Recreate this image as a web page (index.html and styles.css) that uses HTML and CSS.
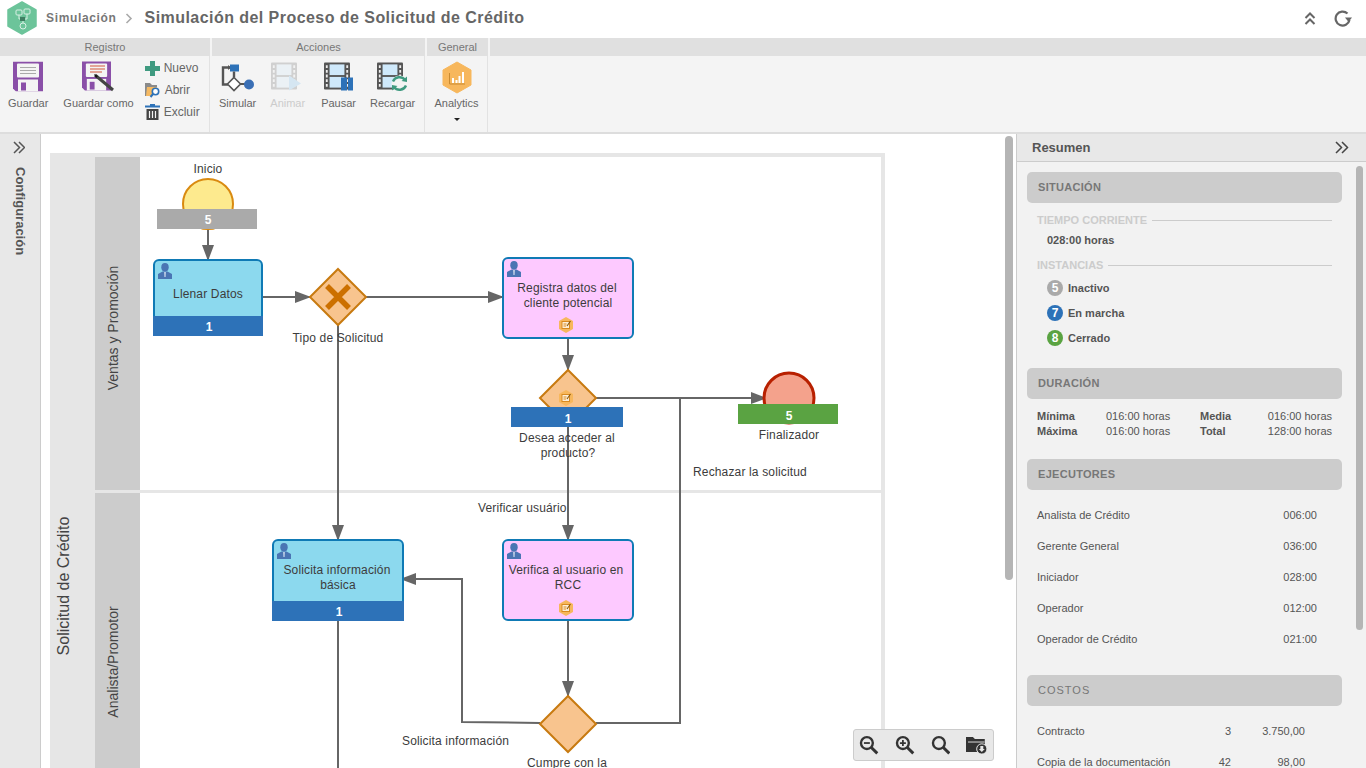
FILE: index.html
```html
<!DOCTYPE html>
<html lang="es">
<head>
<meta charset="utf-8">
<title>Simulación del Proceso de Solicitud de Crédito</title>
<link rel="stylesheet" href="styles.css">
</head>
<body>

<!-- shared icons -->
<svg class="defs" width="0" height="0" xmlns="http://www.w3.org/2000/svg">
  <symbol id="person" viewBox="0 0 14 16">
    <ellipse cx="7" cy="4.2" rx="3.7" ry="4.2" fill="#4a75b4"/>
    <path d="M0 16V11L4.5 8.5H9.5L14 11V16Z" fill="#4a75b4"/>
    <path d="M6.3 9H7.7L7.5 14H6.5Z" fill="#dfe9f5"/>
  </symbol>
  <symbol id="badge" viewBox="0 0 14 16">
    <path d="M7 0L14 4V12L7 16L0 12V4Z" fill="#f7b75c"/>
    <rect x="3" y="4.5" width="7.5" height="7" fill="#fdeed6" stroke="#d98a20" stroke-width="1"/>
    <path d="M4.5 7H7.5M4.5 9H7" stroke="#d98a20" stroke-width="1"/>
    <path d="M8 9L11.5 4" stroke="#8a5a10" stroke-width="1.2"/>
  </symbol>
  <symbol id="film" viewBox="0 0 28 29">
    <rect width="28" height="29" rx="1" fill="#555"/>
    <rect x="6" y="2" width="16" height="11.5" fill="#cfe9fb"/>
    <rect x="6" y="15.5" width="16" height="11.5" fill="#cfe9fb"/>
    <path d="M2 3h2v3H2zM2 8h2v3H2zM2 13h2v3H2zM2 18h2v3H2zM2 23h2v3H2zM24 3h2v3h-2zM24 8h2v3h-2zM24 13h2v3h-2zM24 18h2v3h-2zM24 23h2v3h-2z" fill="#eee"/>
  </symbol>
  <symbol id="floppy" viewBox="0 0 30 30">
    <path d="M0 0H30V30H3L0 27Z" fill="#8a4fa8"/>
    <rect x="4" y="2" width="22" height="14" rx="1" fill="#f4f4f4"/>
    <rect x="5" y="18" width="20" height="12" fill="#f4f4f4"/>
    <rect x="8" y="21" width="5" height="8" fill="#8a4fa8"/>
  </symbol>
  <symbol id="lens" viewBox="0 0 20 20">
    <circle cx="8" cy="8" r="6" fill="none" stroke="#333" stroke-width="2.4"/>
    <path d="M12.5 12.5L18.5 18.5" stroke="#333" stroke-width="3"/>
  </symbol>
</svg>

<div class="page">

  <header class="topbar">
    <svg class="logo" width="30" height="34" viewBox="0 0 30 34" xmlns="http://www.w3.org/2000/svg">
      <path d="M15 1L29 9V25L15 33L1 25V9Z" fill="#6cc49a" stroke="#6cc49a" stroke-width="1.5" stroke-linejoin="round"/>
      <rect x="9" y="9" width="6" height="5" rx="1" fill="none" stroke="#d8f0e4"/>
      <rect x="17" y="8" width="6" height="5" rx="1" fill="none" stroke="#d8f0e4"/>
      <rect x="13" y="16" width="5" height="4" fill="#3f7f62"/>
      <circle cx="16" cy="25" r="3" fill="none" stroke="#d8f0e4"/>
      <path d="M12 14V18H13M20 13V18H18M16 20V22" fill="none" stroke="#d8f0e4"/>
    </svg>
    <span class="crumb">Simulación</span>
    <svg class="crumb-sep" width="8" height="11" viewBox="0 0 8 11" xmlns="http://www.w3.org/2000/svg"><path d="M1.5 1L6 5.5L1.5 10" fill="none" stroke="#aaa" stroke-width="1.6"/></svg>
    <h1 class="title">Simulación del Proceso de Solicitud de Crédito</h1>
    <div class="top-actions">
      <svg width="12" height="13" viewBox="0 0 12 13" xmlns="http://www.w3.org/2000/svg"><path d="M1.5 6L6 1.5L10.5 6M1.5 12L6 7.5L10.5 12" fill="none" stroke="#666" stroke-width="2"/></svg>
      <svg width="18" height="17" viewBox="0 0 18 17" xmlns="http://www.w3.org/2000/svg"><path d="M13.5 3.5A7 7 0 1 0 15.5 10" fill="none" stroke="#666" stroke-width="2.2"/><path d="M11 7.5H18L14.5 12Z" fill="#666"/></svg>
    </div>
  </header>

  <section class="ribbon">
    <div class="group group-registro">
      <div class="group-title">Registro</div>
      <div class="group-body">
        <div class="tool tool-save">
          <svg width="30" height="30" viewBox="0 0 30 30" xmlns="http://www.w3.org/2000/svg">
            <use href="#floppy" width="30" height="30"/>
            <path d="M7 6H23M7 9H23M7 12H23" stroke="#aaa" stroke-width="1"/>
          </svg>
          <span>Guardar</span>
        </div>
        <div class="tool tool-saveas">
          <svg width="33" height="31" viewBox="0 0 33 31" xmlns="http://www.w3.org/2000/svg">
            <use href="#floppy" width="29" height="30"/>
            <path d="M8 5H23M8 8H23M8 11H20" stroke="#d2563a" stroke-width="1"/>
            <path d="M13 14L31 29" stroke="#444" stroke-width="3"/>
            <path d="M12 13L14 17L16 15Z" fill="#111"/>
          </svg>
          <span>Guardar como</span>
        </div>
        <ul class="mini-tools">
          <li>
            <svg width="15" height="15" viewBox="0 0 15 15" xmlns="http://www.w3.org/2000/svg"><path d="M5 0H10V5H15V10H10V15H5V10H0V5H5Z" fill="#3f9a80"/></svg>
            Nuevo
          </li>
          <li>
            <svg width="16" height="16" viewBox="0 0 16 16" xmlns="http://www.w3.org/2000/svg"><path d="M0 1H5L7 3H12V5H2V14H0Z" fill="#8a8a8a"/><path d="M1 14L2 5H12L11 9L7 14Z" fill="#f5b962"/><circle cx="10.5" cy="9.5" r="3.2" fill="#fff" stroke="#2d72b8" stroke-width="1.6"/><path d="M8 12L5.5 15" stroke="#2d72b8" stroke-width="2"/></svg>
            Abrir
          </li>
          <li>
            <svg width="15" height="16" viewBox="0 0 15 16" xmlns="http://www.w3.org/2000/svg"><rect y="1.5" width="15" height="2" fill="#2d72b8"/><rect x="5" width="5" height="2" fill="#2d72b8"/><path d="M1.5 5H13.5V16H1.5Z" fill="#444"/><path d="M4.5 7V14M7.5 7V14M10.5 7V14" stroke="#f4f4f4" stroke-width="1.2"/></svg>
            Excluir
          </li>
        </ul>
      </div>
    </div>

    <div class="group group-acciones">
      <div class="group-title">Acciones</div>
      <div class="group-body">
        <div class="tool">
          <svg width="34" height="30" viewBox="0 0 34 30" xmlns="http://www.w3.org/2000/svg">
            <path d="M9 6H2V23H7" fill="none" stroke="#555" stroke-width="2.4"/>
            <path d="M7 3.5L10 6L7 8.5Z" fill="#555"/>
            <rect x="9" y="3" width="9" height="7" fill="#2d72b8"/>
            <path d="M13 10V16" stroke="#555" stroke-width="2.4"/>
            <path d="M13 16L19.5 22.5L13 29L6.5 22.5Z" fill="#fff" stroke="#555" stroke-width="1.6"/>
            <path d="M19 22.5H24" stroke="#555" stroke-width="2"/>
            <circle cx="28" cy="23" r="5" fill="#3a6fb5"/>
          </svg>
          <span>Simular</span>
        </div>
        <div class="tool tool-off">
          <svg width="34" height="30" viewBox="0 0 34 30" xmlns="http://www.w3.org/2000/svg">
            <g opacity=".22"><use href="#film" width="26" height="29"/></g>
            <path d="M18 14L30 22L18 29Z" fill="#d5e6f2"/>
          </svg>
          <span>Animar</span>
        </div>
        <div class="tool tool-pause">
          <svg width="30" height="30" viewBox="0 0 30 30" xmlns="http://www.w3.org/2000/svg">
            <use href="#film" width="26" height="29"/>
            <rect x="17" y="16" width="6" height="13" fill="#2d72b8"/>
            <rect x="24" y="16" width="5" height="13" fill="#2d72b8"/>
          </svg>
          <span>Pausar</span>
        </div>
        <div class="tool">
          <svg width="32" height="30" viewBox="0 0 32 30" xmlns="http://www.w3.org/2000/svg">
            <use href="#film" width="26" height="29"/>
            <circle cx="22.5" cy="22" r="8" fill="#f4f4f4"/>
            <path d="M16 20A7 7 0 0 1 28 18.5M29 24A7 7 0 0 1 17 25.5" fill="none" stroke="#3f9a80" stroke-width="2.4"/>
            <path d="M24.5 19.5L30 20.5L30 15Z" fill="#3f9a80"/>
            <path d="M20.5 24.5L15 23.5L15 29Z" fill="#3f9a80"/>
          </svg>
          <span>Recargar</span>
        </div>
      </div>
    </div>

    <div class="group group-general">
      <div class="group-title">General</div>
      <div class="group-body">
        <div class="tool tool-analytics">
          <svg width="30" height="33" viewBox="0 0 30 33" xmlns="http://www.w3.org/2000/svg">
            <path d="M15 1L29 9V24L15 32L1 24V9Z" fill="#f7b75c" stroke="#f7b75c" stroke-linejoin="round"/>
            <path d="M7.5 12V23H23" fill="none" stroke="#c98a30" stroke-width="1"/>
            <path d="M10 17h2v5h-2zM13.5 19h2v3h-2zM16.5 15h2v7h-2zM20 11h2v11h-2z" fill="#fff"/>
          </svg>
          <span>Analytics</span>
          <i class="caret"></i>
        </div>
      </div>
    </div>

    <div class="group group-rest">
      <div class="group-title"></div>
    </div>
  </section>

  <main class="workspace">
    <aside class="side-left">
      <svg width="12" height="13" viewBox="0 0 12 13" xmlns="http://www.w3.org/2000/svg"><path d="M1 1L6.5 6.5L1 12M6 1L11.5 6.5L6 12" fill="none" stroke="#555" stroke-width="1.5"/></svg>
      <span class="side-label">Configuración</span>
    </aside>

    <div class="canvas">
      <svg class="diagram" width="975" height="634" viewBox="41 134 975 634" xmlns="http://www.w3.org/2000/svg">
        <defs>
          <marker id="head" markerUnits="userSpaceOnUse" markerWidth="16" markerHeight="12" refX="16" refY="6" orient="auto">
            <path d="M0 0L16 6L0 12Z" fill="#666"/>
          </marker>
        </defs>

        <!-- pool and lanes -->
        <rect class="pool" x="50" y="153" width="835" height="615"/>
        <rect class="lane-head" x="95" y="157" width="45" height="333"/>
        <rect class="lane-head" x="95" y="493" width="45" height="275"/>
        <rect class="lane" x="140" y="157" width="741" height="333"/>
        <rect class="lane" x="140" y="493" width="741" height="275"/>
        <text class="pool-label" transform="translate(69 586) rotate(-90)">Solicitud de Crédito</text>
        <text class="lane-label" transform="translate(118 328) rotate(-90)">Ventas y Promoción</text>
        <text class="lane-label" transform="translate(118 662) rotate(-90)">Analista/Promotor</text>

        <!-- flows -->
        <path class="flow" d="M208 229V261" marker-end="url(#head)"/>
        <path class="flow" d="M262 297H311" marker-end="url(#head)"/>
        <path class="flow" d="M366 297H504" marker-end="url(#head)"/>
        <path class="flow" d="M338 325V541" marker-end="url(#head)"/>
        <path class="flow" d="M568 339V371" marker-end="url(#head)"/>
        <path class="flow" d="M596 398H767" marker-end="url(#head)"/>
        <path class="flow" d="M568 427V541" marker-end="url(#head)"/>
        <path class="flow" d="M680 398V723H596"/>
        <path class="flow" d="M568 620V697" marker-end="url(#head)"/>
        <path class="flow" d="M540 723L462 722V579H400" marker-end="url(#head)"/>
        <path class="flow" d="M338 621V768"/>

        <!-- start -->
        <text class="lbl" x="208" y="173">Inicio</text>
        <circle cx="208" cy="204" r="25" fill="#fdea8e" stroke="#d98a10" stroke-width="2"/>
        <rect x="157" y="209" width="100" height="20" fill="#aaa"/>
        <text class="count" x="208" y="224">5</text>

        <!-- Llenar Datos -->
        <rect class="task-blue" x="154" y="260" width="108" height="70" rx="5"/>
        <rect class="bar" x="153" y="316" width="110" height="20"/>
        <text class="count" x="209" y="331">1</text>
        <use href="#person" x="158" y="263" width="14" height="16"/>
        <text class="lbl" x="208" y="298">Llenar Datos</text>

        <!-- Tipo de Solicitud -->
        <path class="gate" d="M338 269L366 297L338 325L310 297Z"/>
        <path d="M327 286L349 308M349 286L327 308" stroke="#cc7000" stroke-width="5.5"/>
        <text class="lbl" x="338" y="342">Tipo de Solicitud</text>

        <!-- Registra datos -->
        <rect class="task-pink" x="503" y="258" width="130" height="80" rx="5"/>
        <use href="#person" x="507" y="261" width="14" height="16"/>
        <text class="lbl" x="567" y="292">Registra datos del</text>
        <text class="lbl" x="568" y="307">cliente potencial</text>
        <use href="#badge" x="559" y="317" width="14" height="16"/>

        <!-- Desea acceder -->
        <path class="gate" d="M568 370L596 398L568 426L540 398Z"/>
        <use href="#badge" x="559" y="390" width="14" height="16"/>
        <rect class="bar" x="511" y="407" width="112" height="20"/>
        <text class="count" x="568" y="423">1</text>
        <text class="lbl" x="567" y="442">Desea acceder al</text>
        <text class="lbl" x="568" y="457">producto?</text>

        <!-- Finalizador -->
        <circle cx="789" cy="398" r="25" fill="#f4a28c" stroke="#b82000" stroke-width="3"/>
        <rect x="738" y="404" width="100" height="20" fill="#5aa342"/>
        <text class="count" x="789" y="420">5</text>
        <text class="lbl" x="789" y="439">Finalizador</text>

        <text class="lbl lbl-start" x="693" y="476">Rechazar la solicitud</text>
        <text class="lbl lbl-start" x="478" y="512">Verificar usuário</text>

        <!-- Solicita informacion -->
        <rect class="task-blue" x="273" y="540" width="130" height="70" rx="5"/>
        <rect class="bar" x="272" y="601" width="132" height="20"/>
        <text class="count" x="339" y="616">1</text>
        <use href="#person" x="277" y="543" width="14" height="16"/>
        <text class="lbl" x="337" y="574">Solicita información</text>
        <text class="lbl" x="338" y="589">básica</text>

        <!-- Verifica -->
        <rect class="task-pink" x="503" y="540" width="130" height="80" rx="5"/>
        <use href="#person" x="507" y="543" width="14" height="16"/>
        <text class="lbl" x="566" y="574">Verifica al usuario en</text>
        <text class="lbl" x="568" y="589">RCC</text>
        <use href="#badge" x="559" y="600" width="14" height="16"/>

        <!-- Cumpre -->
        <path class="gate" d="M568 696L596 724L568 752L540 724Z"/>
        <text class="lbl lbl-start" x="402" y="745">Solicita información</text>
        <text class="lbl" x="567" y="767">Cumpre con la</text>
      </svg>

      <div class="scroll-main"></div>

      <div class="zoom-bar">
        <svg width="20" height="20" viewBox="0 0 20 20" xmlns="http://www.w3.org/2000/svg"><use href="#lens"/><path d="M5 8H11" stroke="#333" stroke-width="1.8"/></svg>
        <svg width="20" height="20" viewBox="0 0 20 20" xmlns="http://www.w3.org/2000/svg"><use href="#lens"/><path d="M5 8H11M8 5V11" stroke="#333" stroke-width="1.8"/></svg>
        <svg width="20" height="20"><use href="#lens"/></svg>
        <svg width="22" height="20" viewBox="0 0 22 20" xmlns="http://www.w3.org/2000/svg">
          <path d="M0 2H7L9 4H19V17H0Z" fill="#333"/>
          <path d="M2 6H19V8H2Z" fill="#888"/>
          <circle cx="16" cy="14" r="5.2" fill="#333" stroke="#e8e8e8"/>
          <path d="M14.5 11H17.5V14H19L16 17L13 14H14.5Z" fill="#e8e8e8"/>
        </svg>
      </div>
    </div>

    <aside class="summary">
      <div class="summary-head">
        <span>Resumen</span>
        <svg width="14" height="13" viewBox="0 0 14 13" xmlns="http://www.w3.org/2000/svg"><path d="M1 1L6.5 6.5L1 12M7 1L12.5 6.5L7 12" fill="none" stroke="#444" stroke-width="1.5"/></svg>
      </div>
      <div class="summary-body">
        <div class="scroll-side"></div>

        <h2 class="sec-title">Situación</h2>
        <div class="sec-situacion">
          <div class="rule-title">Tiempo corriente</div>
          <div class="strong-line">028:00 horas</div>
          <div class="rule-title rule-second">Instancias</div>
          <ul class="states">
            <li><b class="dot dot-gray">5</b>Inactivo</li>
            <li><b class="dot dot-blue">7</b>En marcha</li>
            <li><b class="dot dot-green">8</b>Cerrado</li>
          </ul>
        </div>

        <h2 class="sec-title">Duración</h2>
        <div class="durations">
          <b>Mínima</b><span>016:00 horas</span><b>Media</b><span class="num">016:00 horas</span>
          <b>Máxima</b><span>016:00 horas</span><b>Total</b><span class="num">128:00 horas</span>
        </div>

        <h2 class="sec-title">Ejecutores</h2>
        <ul class="rows rows-exec">
          <li><span>Analista de Crédito</span><span>006:00</span></li>
          <li><span>Gerente General</span><span>036:00</span></li>
          <li><span>Iniciador</span><span>028:00</span></li>
          <li><span>Operador</span><span>012:00</span></li>
          <li><span>Operador de Crédito</span><span>021:00</span></li>
        </ul>

        <h2 class="sec-title sec-light">Costos</h2>
        <ul class="rows rows-cost">
          <li><span>Contracto</span><span>3</span><span>3.750,00</span></li>
          <li><span>Copia de la documentación</span><span>42</span><span>98,00</span></li>
        </ul>
      </div>
    </aside>
  </main>
</div>

</body>
</html>
```

FILE: styles.css
```css
* {box-sizing: border-box;}

html, body {
  margin: 0;
  height: 100%;
  overflow: hidden;
}

body {
  font-family: "Liberation Sans", Arial, sans-serif;
  font-size: 11px;
  color: #555;
  background: #fff;
}

ul {
  list-style: none;
  margin: 0;
  padding: 0;
}

.defs {
  position: absolute;
}

.page {
  display: flex;
  flex-direction: column;
  height: 768px;
}

/* top bar */
.topbar {
  display: flex;
  align-items: center;
  flex: 0 0 38px;
  padding: 0 14px 2px 7px;
}
.crumb {
  margin-left: 9px;
  font-size: 12px;
  font-weight: bold;
  letter-spacing: .65px;
  color: #777;
}
.crumb-sep {
  margin: 0 12px 0 8px;
}
.title {
  margin: 0;
  font-size: 16px;
  font-weight: bold;
  letter-spacing: .45px;
  color: #666;
}
.top-actions {
  display: flex;
  align-items: center;
  gap: 18px;
  margin-left: auto;
}

/* ribbon */
.ribbon {
  display: flex;
  flex: 0 0 96px;
  gap: 2px;
  background: #f4f4f4;
  border-bottom: 2px solid #ddd;
}
.group {
  display: flex;
  flex-direction: column;
  border-right: 1px solid #e2e2e2;
}
.group-title {
  flex: 0 0 18px;
  line-height: 18px;
  margin-right: -1px;
  font-size: 11px;
  text-align: center;
  color: #777;
  background: #e0e0e0;
}
.group-registro { width: 210px; }
.group-acciones { width: 213px; }
.group-general { width: 61px; }
.group-rest {
  flex: 1;
  border-right: 0;
}
.group-rest .group-title { margin-right: 0; }
.group-body {
  display: flex;
  flex: 1;
  padding-top: 5px;
}
.tool {
  display: flex;
  flex-direction: column;
  align-items: center;
  padding: 0 7px;
  font-size: 11px;
  color: #666;
}
.tool svg {
  height: 31px;
  margin-bottom: 5px;
}
.tool-save { padding: 0 8px; }
.tool-saveas { padding: 0 6px 0 7px; }
.tool-off { color: #ccc; }
.tool-pause { margin-left: 2px; }
.tool-analytics {
  width: 100%;
  padding: 0 1px 0 0;
}
.tool-analytics svg {
  height: 33px;
  margin-bottom: 3px;
}
.caret {
  width: 0;
  height: 0;
  margin-top: 9px;
  border: 3px solid transparent;
  border-top: 3px solid #222;
  border-bottom: 0;
}
.mini-tools {
  margin: -4px 0 0 5px;
}
.mini-tools li {
  display: flex;
  align-items: center;
  gap: 4px;
  height: 22px;
  font-size: 12px;
  color: #666;
}

/* main area */
.workspace {
  display: flex;
  flex: 1;
  min-height: 0;
}
.side-left {
  display: flex;
  flex-direction: column;
  align-items: center;
  flex: 0 0 41px;
  padding: 7px 3px 0 0;
  background: #e8e8e8;
  border-right: 1px solid #ccc;
}
.side-label {
  margin: 13px 0 0 3px;
  writing-mode: vertical-rl;
  font-size: 13px;
  font-weight: bold;
  color: #555;
}
.canvas {
  position: relative;
  flex: 0 0 975px;
  overflow: hidden;
  background: #fff;
}
.diagram {
  display: block;
}
.pool { fill: #e6e6e6; }
.lane { fill: #fff; }
.lane-head { fill: #ccc; }
.pool-label {
  font-size: 16px;
  fill: #444;
  text-anchor: middle;
}
.lane-label {
  font-size: 14px;
  fill: #444;
  text-anchor: middle;
}
.flow {
  fill: none;
  stroke: #666;
  stroke-width: 2;
}
.lbl {
  font-size: 12px;
  letter-spacing: .15px;
  fill: #3c3c3c;
  text-anchor: middle;
}
.lbl-start { text-anchor: start; }
.count {
  font-size: 12px;
  font-weight: bold;
  fill: #fff;
  text-anchor: middle;
}
.bar { fill: #2d72b8; }
.task-blue {
  fill: #8cd9ee;
  stroke: #0f7ab5;
  stroke-width: 2;
}
.task-pink {
  fill: #fdc9ff;
  stroke: #0f7ab5;
  stroke-width: 2;
}
.gate {
  fill: #f8c48e;
  stroke: #c87a10;
  stroke-width: 2;
}
.scroll-main {
  position: absolute;
  top: 2px;
  left: 964px;
  width: 8px;
  height: 444px;
  border-radius: 4px;
  background: #b5b5b5;
}
.zoom-bar {
  position: absolute;
  top: 595px;
  left: 812px;
  display: flex;
  align-items: center;
  gap: 16px;
  width: 141px;
  height: 32px;
  padding: 0 5px;
  background: #e8e8e8;
  border: 1px solid #ccc;
  border-radius: 3px;
}

/* summary panel */
.summary {
  display: flex;
  flex-direction: column;
  flex: 1;
  min-width: 0;
  background: #f2f2f2;
  border-left: 1px solid #ccc;
}
.summary-head {
  display: flex;
  align-items: center;
  justify-content: space-between;
  flex: 0 0 28px;
  padding: 0 17px 0 15px;
  font-size: 13px;
  font-weight: bold;
  color: #555;
  background: #e8e8e8;
  border-bottom: 1px solid #ccc;
}
.summary-body {
  position: relative;
  flex: 1;
  overflow: hidden;
  padding: 10px 24px 0 10px;
}
.scroll-side {
  position: absolute;
  top: 4px;
  right: 3px;
  width: 7px;
  height: 464px;
  border-radius: 4px;
  background: #b5b5b5;
}
.sec-title {
  height: 31px;
  margin: 0;
  padding-left: 11px;
  line-height: 31px;
  font-size: 11px;
  font-weight: bold;
  letter-spacing: .3px;
  text-transform: uppercase;
  color: #777;
  background: #ccc;
  border-radius: 5px;
}
.sec-light {
  font-weight: normal;
  letter-spacing: 1px;
}
.sec-situacion {
  height: 165px;
  padding: 10px 10px 0;
}
.rule-title {
  display: flex;
  align-items: center;
  gap: 5px;
  height: 14px;
  font-weight: bold;
  text-transform: uppercase;
  color: #ccc;
}
.rule-title::after {
  content: "";
  flex: 1;
  height: 1px;
  background: #ccc;
}
.rule-second {
  margin-top: 11px;
}
.strong-line {
  margin: 6px 0 0 10px;
  height: 14px;
  line-height: 14px;
  font-weight: bold;
}
.states {
  margin: 3px 0 0 10px;
}
.states li {
  display: flex;
  align-items: center;
  gap: 5px;
  height: 25px;
  font-weight: bold;
}
.dot {
  width: 16px;
  height: 16px;
  line-height: 16px;
  border-radius: 50%;
  font-size: 12px;
  text-align: center;
  color: #fff;
}
.dot-gray { background: #aaa; }
.dot-blue { background: #2d72b8; }
.dot-green { background: #5aa342; }
.durations {
  display: grid;
  grid-template-columns: 69px 94px 1fr auto;
  grid-auto-rows: 15px;
  align-items: center;
  height: 60px;
  padding: 9px 10px 0;
}
.rows {
  padding: 9px 0 0 10px;
}
.rows li {
  display: grid;
  align-items: center;
  height: 31px;
}
.rows li span:not(:first-child) {
  text-align: right;
}
.rows-exec {
  height: 185px;
  padding-right: 25px;
}
.rows-exec li {
  grid-template-columns: 1fr auto;
}
.rows-cost {
  padding-right: 37px;
}
.rows-cost li {
  grid-template-columns: 1fr 40px 74px;
}
```
